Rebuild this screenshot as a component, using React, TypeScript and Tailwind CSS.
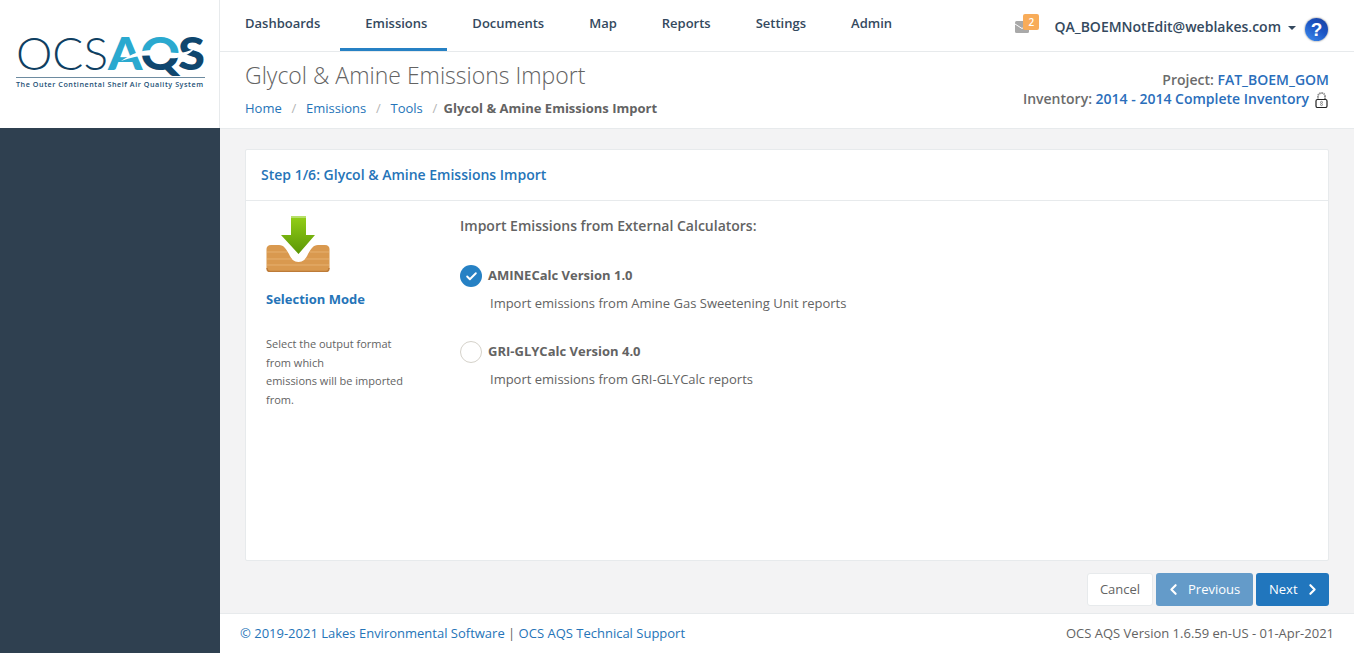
import { ChevronLeft, ChevronRight, Check } from 'lucide-react'

const navItems = ['Dashboards', 'Emissions', 'Documents', 'Map', 'Reports', 'Settings', 'Admin']
const crumbs = ['Home', 'Emissions', 'Tools']

function Logo() {
  return (
    <svg width="192" height="72" viewBox="0 0 192 72" className="block">
      <defs>
        <linearGradient id="qfill" gradientUnits="userSpaceOnUse" x1="0" y1="10" x2="0" y2="50">
          <stop offset="0.58" stopColor="#2aa9cf" />
          <stop offset="0.58" stopColor="#0f466e" />
        </linearGradient>
      </defs>
      <text x="1" y="50" fontFamily="Lato" fontSize="46" fontWeight="300" fill="#0f3f62" textLength="92" lengthAdjust="spacingAndGlyphs">OCS</text>
      <text x="93" y="50" fontFamily="Lato" fontSize="46" fontWeight="900" textLength="97" lengthAdjust="spacingAndGlyphs">
        <tspan fill="#2aa9cf">A</tspan>
        <tspan fill="url(#qfill)" dx="-1">Q</tspan>
        <tspan fill="#0f466e" dx="-2">S</tspan>
      </text>
      <path d="M106 41 C120 31 133 28 148 31 C160 34 170 34 180 28 C172 38 158 40 146 37 C132 34 120 36 106 41Z" fill="#ffffff" />
      <rect x="1" y="57" width="189" height="1" fill="#6d8ba0" />
      <text x="1" y="67" fontFamily="Open Sans" fontWeight="600" fontSize="7.2" fill="#1c4f75" textLength="187" lengthAdjust="spacing">The Outer Continental Shelf Air Quality System</text>
    </svg>
  )
}

function ImportIcon() {
  return (
    <svg width="64" height="56" viewBox="0 0 64 56" className="block">
      <defs>
        <linearGradient id="arrow" x1="0" y1="0" x2="0" y2="1">
          <stop offset="0" stopColor="#93cf17" />
          <stop offset="1" stopColor="#5b9606" />
        </linearGradient>
      </defs>
      <path d="M5 29 H13 C18 29 20 33 23 38 C25 43 28 46 32.5 46 C37 46 40 43 42 38 C45 33 47 29 52 29 H59 C62 29 63.5 31 63.5 33 V52 C63.5 54 62 55.5 60 55.5 H4 C2 55.5 .5 54 .5 52 V33 C.5 31 2 29 5 29Z" fill="#d9994f" />
      <path d="M1 36 H21 M44 36 H63 M1 43 H26 M39 43 H63 M1 49 H63" stroke="#e6b070" strokeWidth="1" />
      <path d="M1 52 C1 54 2 55.5 4 55.5 H60 C62 55.5 63 54 63 52" fill="none" stroke="#bd7b38" strokeWidth="1.5" />
      <path d="M25 0 H40 V19 H49 L32.5 38 L15 19 H25Z" fill="url(#arrow)" />
      <rect x="25" y="0" width="15" height="2" fill="#b7df6a" />
    </svg>
  )
}

function HelpIcon() {
  return (
    <div className="mt-[4px] flex h-[23px] w-[23px] items-center justify-center rounded-full bg-[linear-gradient(35deg,#3f8ff0,#1c55c4_55%,#1b3f9c)] shadow-[0_0_2px_#666]">
      <span className="font-['Liberation_Sans',sans-serif] text-[19px] font-bold leading-none text-white">?</span>
    </div>
  )
}

function MailIcon() {
  return (
    <div className="relative mr-[15px] h-[20px] w-[24px]">
      <svg width="14" height="12" viewBox="0 0 14 12" className="absolute left-0 top-[7px]">
        <rect width="14" height="12" rx="1.5" fill="#a9a9a9" />
        <path d="M0 3 L7 7.5 L14 3" fill="none" stroke="#ffffff" strokeWidth="1" />
      </svg>
      <span className="absolute left-[8px] top-0 flex h-[16px] w-[16px] items-center justify-center rounded-[2px] bg-[#f8ac59] text-[10px] font-semibold text-white">2</span>
    </div>
  )
}

function PadLock() {
  return (
    <svg width="13" height="16" viewBox="0 0 13 16" className="ml-[6px] mt-[2px] block">
      <path d="M3 8 V4.5 C3 2.3 4.5 1 6.5 1 C8.5 1 10 2.3 10 4.5 V8" fill="none" stroke="#8a8a8a" strokeWidth="1.8" strokeDasharray="1.6 .6" />
      <rect x="1" y="7.5" width="11" height="8" rx="1.5" fill="#ffffff" stroke="#222222" strokeWidth="1.2" />
      <circle cx="6.5" cy="10.3" r="1" fill="none" stroke="#777777" strokeWidth=".8" />
      <circle cx="6.5" cy="12.6" r="1" fill="none" stroke="#777777" strokeWidth=".8" />
    </svg>
  )
}

function Option({ checked, title, description }: { checked: boolean; title: string; description: string }) {
  return (
    <div>
      <div className="flex h-[24px] items-center gap-[6px]">
        {checked ? (
          <span className="flex h-[22px] w-[22px] items-center justify-center rounded-full bg-[#2681c4]">
            <Check className="h-[13px] w-[13px] text-white" strokeWidth={3.5} />
          </span>
        ) : (
          <span className="h-[22px] w-[22px] rounded-full border border-[#d5d2ca] bg-white" />
        )}
        <span className="text-[13px] font-bold text-[#636363]">{title}</span>
      </div>
      <p className="mt-[4px] pl-[30px] text-[13px] leading-[22px] text-[#636363]">{description}</p>
    </div>
  )
}

export default function App() {
  return (
    <div className="flex h-[653px] w-[1354px] overflow-hidden bg-[#f3f3f4] font-['Open_Sans',sans-serif] text-[13px] text-[#636363]">
      {/* Sidebar */}
      <aside className="flex w-[220px] shrink-0 flex-col">
        <div className="h-[128px] border-r border-[#e7eaec] bg-white pl-[15px] pt-[20px]">
          <Logo />
        </div>
        <div className="flex-1 bg-[#2f4050]" />
      </aside>

      <main className="flex min-w-0 flex-1 flex-col">
        {/* Top nav */}
        <header className="flex h-[52px] items-start justify-between border-b border-[#e7eaec] bg-white pr-[26px]">
          <nav className="flex">
            {navItems.map((item) => (
              <a
                key={item}
                className={
                  item === 'Emissions'
                    ? 'h-[51px] border-b-[3px] border-[#2681c4] pl-[25px] pr-[20px] pt-[14px] text-[13px] font-semibold leading-[18px] text-[#34495e]'
                    : 'h-[51px] pl-[25px] pr-[20px] pt-[14px] text-[13px] font-semibold leading-[18px] text-[#34495e]'
                }
              >
                {item}
              </a>
            ))}
          </nav>
          <div className="flex items-start pt-[14px]">
            <MailIcon />
            <span className="mt-[3px] text-[14px] font-semibold leading-[20px] text-[#34495e]">QA_BOEMNotEdit@weblakes.com</span>
            <span className="ml-[7px] mr-[9px] mt-[12px] h-0 w-0 border-x-[4px] border-t-[4px] border-x-transparent border-t-[#34495e]" />
            <HelpIcon />
          </div>
        </header>

        {/* Page heading */}
        <section className="flex h-[77px] items-start justify-between border-b border-[#e7eaec] bg-white px-[25px]">
          <div>
            <h1 className="mt-[7px] text-[23px] font-light leading-[33px] text-[#636363]">Glycol &amp; Amine Emissions Import</h1>
            <div className="mt-[7px] flex items-center text-[13px] leading-[18px]">
              {crumbs.map((c) => (
                <span key={c} className="flex">
                  <a className="text-[#2574b8]">{c}</a>
                  <span className="px-[9.75px] text-[#b5b5b5]">/</span>
                </span>
              ))}
              <span className="ml-[-3.5px] font-bold text-[#636363]">Glycol &amp; Amine Emissions Import</span>
            </div>
          </div>
          <div className="mt-[19px] text-right text-[14px] font-semibold leading-[18px] text-[#6b6b6b]">
            <div>
              Project: <a className="text-[#2a6ebb]">FAT_BOEM_GOM</a>
            </div>
            <div className="mt-[1px] flex items-start justify-end pr-[1px]">
              <span>Inventory:&nbsp;</span>
              <a className="text-[#2a6ebb]">2014 - 2014 Complete Inventory</a>
              <PadLock />
            </div>
          </div>
        </section>

        {/* Content */}
        <div className="flex flex-1 flex-col px-[25px] pt-[20px]">
          <div className="flex h-[412px] flex-col rounded-[2px] border border-[#e7eaec] bg-white">
            <div className="flex h-[51px] items-center border-b border-[#e7eaec] px-[15px] pb-[2px]">
              <h2 className="text-[14px] font-semibold text-[#2574b8]">Step 1/6: Glycol &amp; Amine Emissions Import</h2>
            </div>
            <div className="flex flex-1">
              <div className="w-[214px] shrink-0 pl-[20px] pt-[15px]">
                <ImportIcon />
                <h3 className="mt-[18px] text-[13px] font-bold leading-[18px] text-[#2574b8]">Selection Mode</h3>
                <p className="mt-[27px] w-[150px] text-[11px] leading-[18.7px] text-[#636363]">
                  Select the output format from which
                  <br />
                  emissions will be imported from.
                </p>
              </div>
              <div className="flex-1 pt-[15px]">
                <h3 className="text-[14px] font-semibold leading-[20px] text-[#636363]">Import Emissions from External Calculators:</h3>
                <div className="mt-[28px] flex flex-col gap-[26px]">
                  <Option checked title="AMINECalc Version 1.0" description="Import emissions from Amine Gas Sweetening Unit reports" />
                  <Option checked={false} title="GRI-GLYCalc Version 4.0" description="Import emissions from GRI-GLYCalc reports" />
                </div>
              </div>
            </div>
          </div>

          {/* Wizard buttons */}
          <div className="mt-[12px] flex justify-end gap-[3px]">
            <button className="h-[33px] w-[66px] rounded-[3px] border border-[#e7eaec] bg-white text-[13px] text-[#636363]">Cancel</button>
            <button className="flex h-[33px] w-[97px] items-center gap-[6px] rounded-[3px] bg-[#649bc9] pl-[9px] text-[13px] text-white">
              <ChevronLeft className="h-[17px] w-[17px]" strokeWidth={3} />
              Previous
            </button>
            <button className="flex h-[33px] w-[73px] items-center gap-[6px] rounded-[3px] bg-[#2176bd] pl-[13px] text-[13px] text-white">
              Next
              <ChevronRight className="h-[17px] w-[17px]" strokeWidth={3} />
            </button>
          </div>
        </div>

        {/* Footer */}
        <footer className="flex h-[40px] items-center justify-between border-t border-[#e7eaec] bg-white pl-[20px] pr-[20px] text-[13px]">
          <div>
            <a className="text-[#2574b8]">© 2019-2021 Lakes Environmental Software</a>
            <span className="text-[#636363]"> | </span>
            <a className="text-[#2574b8]">OCS AQS Technical Support</a>
          </div>
          <span className="text-[#636363]">OCS AQS Version 1.6.59 en-US - 01-Apr-2021</span>
        </footer>
      </main>
    </div>
  )
}
